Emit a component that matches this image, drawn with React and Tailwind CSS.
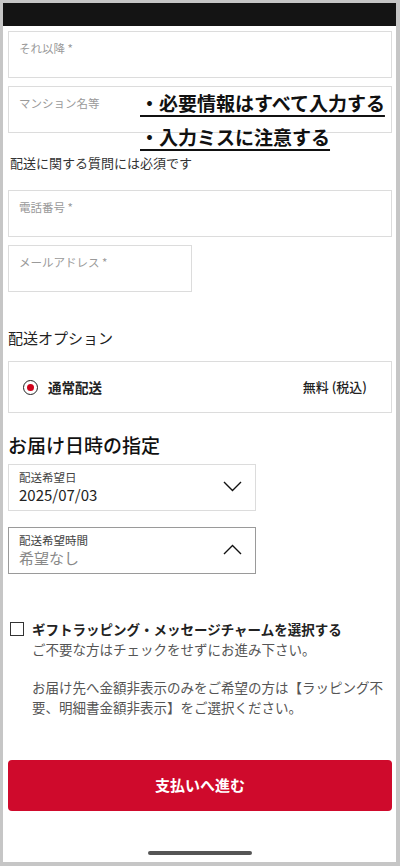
import React from "react";

const font = { fontFamily: '"Noto Sans CJK JP", "Noto Sans", sans-serif' };

function Field({ label, className = "" }) {
  return (
    <div className={`h-[47px] border border-[#dcdcdc] pl-[10px] pt-[8px] text-[11.5px] leading-[16px] text-[#9a9a9a] ${className}`}>
      <span className="block">{label}</span>
    </div>
  );
}

function Chevron({ up }) {
  return (
    <svg width="19" height="11" viewBox="0 0 19 11" fill="none">
      <path
        d={up ? "M1 10 L9.5 1.5 L18 10" : "M1 1 L9.5 9.5 L18 1"}
        stroke="#111"
        strokeWidth="1.4"
      />
    </svg>
  );
}

export default function App() {
  return (
    <div className="w-[400px] h-[866px] bg-[#c6c6c6] pt-[3px] pl-[3px] pr-[4px] pb-[4px]" style={font}>
      <div className="relative flex h-full flex-col bg-white">
        <div className="h-[23px] bg-[#141414]" />
        <div className="flex flex-1 flex-col pl-[5px] pr-[4px]">
          <Field label="それ以降 *" className="mt-[5px]" />
          <Field label="マンション名等" className="mt-[8px]" />
          <p className="mt-[20px] pl-[2px] text-[13px] leading-[20px] text-[#333]">配送に関する質問には必須です</p>
          <Field label="電話番号 *" className="mt-[17px]" />
          <Field label="メールアドレス *" className="mt-[8px] w-[184px]" />
          <h2 className="mt-[35px] text-[15px] leading-[22px] text-[#222]">配送オプション</h2>
          <div className="mt-[12px] flex h-[52px] items-center border border-[#dcdcdc] pl-[14px] pr-[24px]">
            <span className="flex h-[15px] w-[15px] items-center justify-center rounded-full border-[1.5px] border-[#222]">
              <span className="h-[7px] w-[7px] rounded-full bg-[#d0021b]" />
            </span>
            <span className="ml-[10px] text-[13.5px] font-bold text-[#222]">通常配送</span>
            <span className="ml-auto text-[13px] font-medium text-[#222]">無料 (税込)</span>
          </div>
          <h2 className="mt-[18px] text-[19px] font-medium leading-[28px] text-[#111]">お届け日時の指定</h2>
          <div className="mt-[5px] flex h-[47px] w-[248px] items-center border border-[#dcdcdc] pl-[10px] pr-[13px]">
            <div className="flex flex-col">
              <span className="text-[11.5px] leading-[15px] text-[#444]">配送希望日</span>
              <span className="text-[15px] leading-[20px] text-[#222]">2025/07/03</span>
            </div>
            <span className="ml-auto mt-[-2px]"><Chevron /></span>
          </div>
          <div className="mt-[16px] flex h-[47px] w-[248px] items-center border border-[#9a9a9a] pl-[10px] pr-[13px]">
            <div className="flex flex-col">
              <span className="text-[11.5px] leading-[15px] text-[#444]">配送希望時間</span>
              <span className="text-[15px] leading-[20px] text-[#888]">希望なし</span>
            </div>
            <span className="ml-auto mt-[-2px]"><Chevron up /></span>
          </div>
          <div className="mt-[45px] flex items-start">
            <span className="mt-[3px] ml-[2px] h-[14px] w-[14px] shrink-0 border-[1.5px] border-[#333]" />
            <div className="ml-[8px] flex flex-col text-[13.5px] leading-[20px]">
              <span className="font-bold text-[#222]">ギフトラッピング・メッセージチャームを選択する</span>
              <span className="text-[#555]">ご不要な方はチェックをせずにお進み下さい。</span>
              <span className="mt-[18px] text-[#555]">お届け先へ金額非表示のみをご希望の方は【ラッピング不要、明細書金額非表示】をご選択ください。</span>
            </div>
          </div>
          <button className="mt-[43px] flex h-[51px] items-center justify-center rounded-[4px] bg-[#cf0a2c] text-[15px] font-bold text-white">
            支払いへ進む
          </button>
          <div className="mt-auto mb-[7px] flex justify-center">
            <span className="h-[4px] w-[104px] rounded-full bg-[#555]" />
          </div>
        </div>
        <div className="absolute left-[137px] top-[83px] flex flex-col text-[19px] font-bold leading-[34px] text-[#111]">
          <span className="underline decoration-2 underline-offset-[4px]">・必要情報はすべて入力する</span>
          <span className="underline decoration-2 underline-offset-[4px]">・入力ミスに注意する</span>
        </div>
      </div>
    </div>
  );
}
